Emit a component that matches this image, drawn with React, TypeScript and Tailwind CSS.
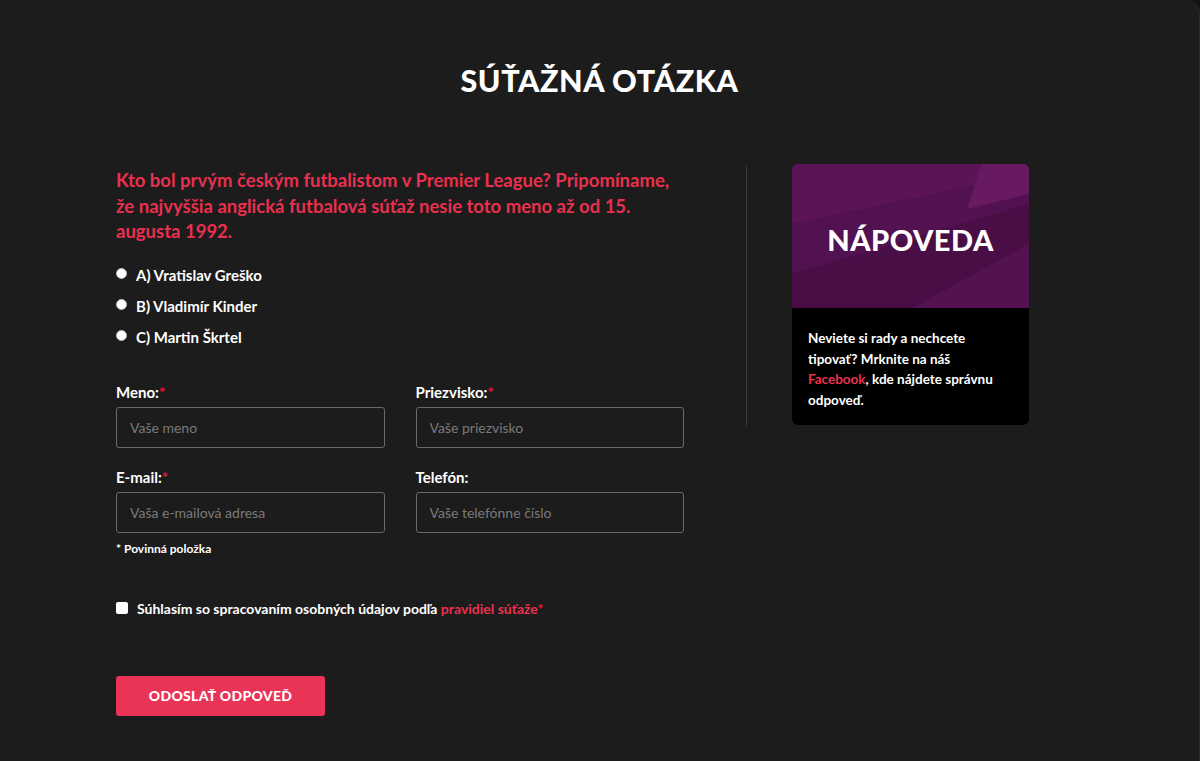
const inputCls =
  "h-[41px] w-full rounded-[3px] border border-[#6a6a6a] bg-transparent px-[13px] text-[14px] text-white placeholder:text-[#7a7a7a] outline-none"

function Field({ label, required, placeholder }: { label: string; required?: boolean; placeholder: string }) {
  return (
    <label className="flex flex-col">
      <span className="mb-[6px] text-[15px] font-bold leading-[18px] text-white">
        {label}
        {required && <span className="text-[#e3173a]">*</span>}
      </span>
      <input className={inputCls} placeholder={placeholder} />
    </label>
  )
}

function Option({ label }: { label: string }) {
  return (
    <label className="flex h-[31px] items-center gap-[9px]">
      <span className="relative -top-[2px] h-[11px] w-[11px] rounded-full border border-[#bbb] bg-white" />
      <span className="text-[15px] font-bold text-white">{label}</span>
    </label>
  )
}

function HintCard() {
  return (
    <div className="w-[237px] overflow-hidden rounded-[6px] bg-black">
      <div className="relative flex h-[144px] items-center justify-center bg-[#4d0f4a] pt-[8px]">
        <svg className="absolute inset-0 h-full w-full" viewBox="0 0 237 144" preserveAspectRatio="none">
          <polygon points="0,0 237,0 237,10 0,60" fill="#5c1459" />
          <polygon points="0,60 237,10 237,40 0,110" fill="#521150" />
          <polygon points="190,0 237,0 237,30 175,45" fill="#671961" />
          <polygon points="0,110 237,40 237,144 0,144" fill="#4a0e46" />
          <polygon points="120,144 237,80 237,144" fill="#541250" />
        </svg>
        <span className="relative font-['Lato',sans-serif] text-[29px] font-black tracking-[0.5px] text-white">
          NÁPOVEDA
        </span>
      </div>
      <p className="px-[16px] pb-[15px] pt-[20px] text-[13.5px] font-bold leading-[20.5px] text-white">
        Neviete si rady a nechcete tipovať? Mrknite na náš{" "}
        <span className="text-[#e8304f]">Facebook</span>, kde nájdete správnu odpoveď.
      </p>
    </div>
  )
}

export default function App() {
  return (
    <div className="min-h-[761px] w-full bg-[#141414] font-['Lato',sans-serif]">
      <div className="min-h-[761px] rounded-tr-[14px] border-r border-[#2a2a2a] bg-[#1c1c1c] pt-[62px]">
        <h1 className="text-center font-['Lato',sans-serif] text-[30.5px] font-black leading-[36px] tracking-[0.6px] text-white">
          SÚŤAŽNÁ OTÁZKA
        </h1>

        <div className="mt-[66px] flex pl-[116px]">
          <form className="w-[568px]">
            <p className="mt-[4px] max-w-[560px] text-[18.5px] font-bold leading-[25.5px] text-[#e8304f]">
              Kto bol prvým českým futbalistom v Premier League? Pripomíname, že najvyššia anglická futbalová súťaž
              nesie toto meno až od 15. augusta 1992.
            </p>

            <div className="mt-[15px] flex flex-col">
              <Option label="A) Vratislav Greško" />
              <Option label="B) Vladimír Kinder" />
              <Option label="C) Martin Škrtel" />
            </div>

            <div className="mt-[30px] grid grid-cols-2 gap-x-[31px] gap-y-[20px]">
              <Field label="Meno:" required placeholder="Vaše meno" />
              <Field label="Priezvisko:" required placeholder="Vaše priezvisko" />
              <Field label="E-mail:" required placeholder="Vaša e-mailová adresa" />
              <Field label="Telefón:" placeholder="Vaše telefónne číslo" />
            </div>

            <p className="mt-[7px] text-[12px] font-bold text-white">* Povinná položka</p>

            <label className="mt-[40px] flex items-center gap-[9px]">
              <span className="h-[12px] w-[12px] rounded-[2px] bg-white" />
              <span className="text-[14px] font-bold text-white">
                Súhlasím so spracovaním osobných údajov podľa{" "}
                <span className="text-[#e8304f]">pravidiel súťaže</span>
                <span className="text-[#e3173a]">*</span>
              </span>
            </label>

            <button
              type="button"
              className="mt-[57px] h-[40px] w-[209px] rounded-[3px] bg-[#e93357] text-[14px] font-black tracking-[0.3px] text-white"
            >
              ODOSLAŤ ODPOVEĎ
            </button>
          </form>

          <div className="ml-[62px] mt-[2px] h-[260px] w-px bg-[#3a3a3a]" />

          <div className="ml-[45px]">
            <HintCard />
          </div>
        </div>
      </div>
    </div>
  )
}
